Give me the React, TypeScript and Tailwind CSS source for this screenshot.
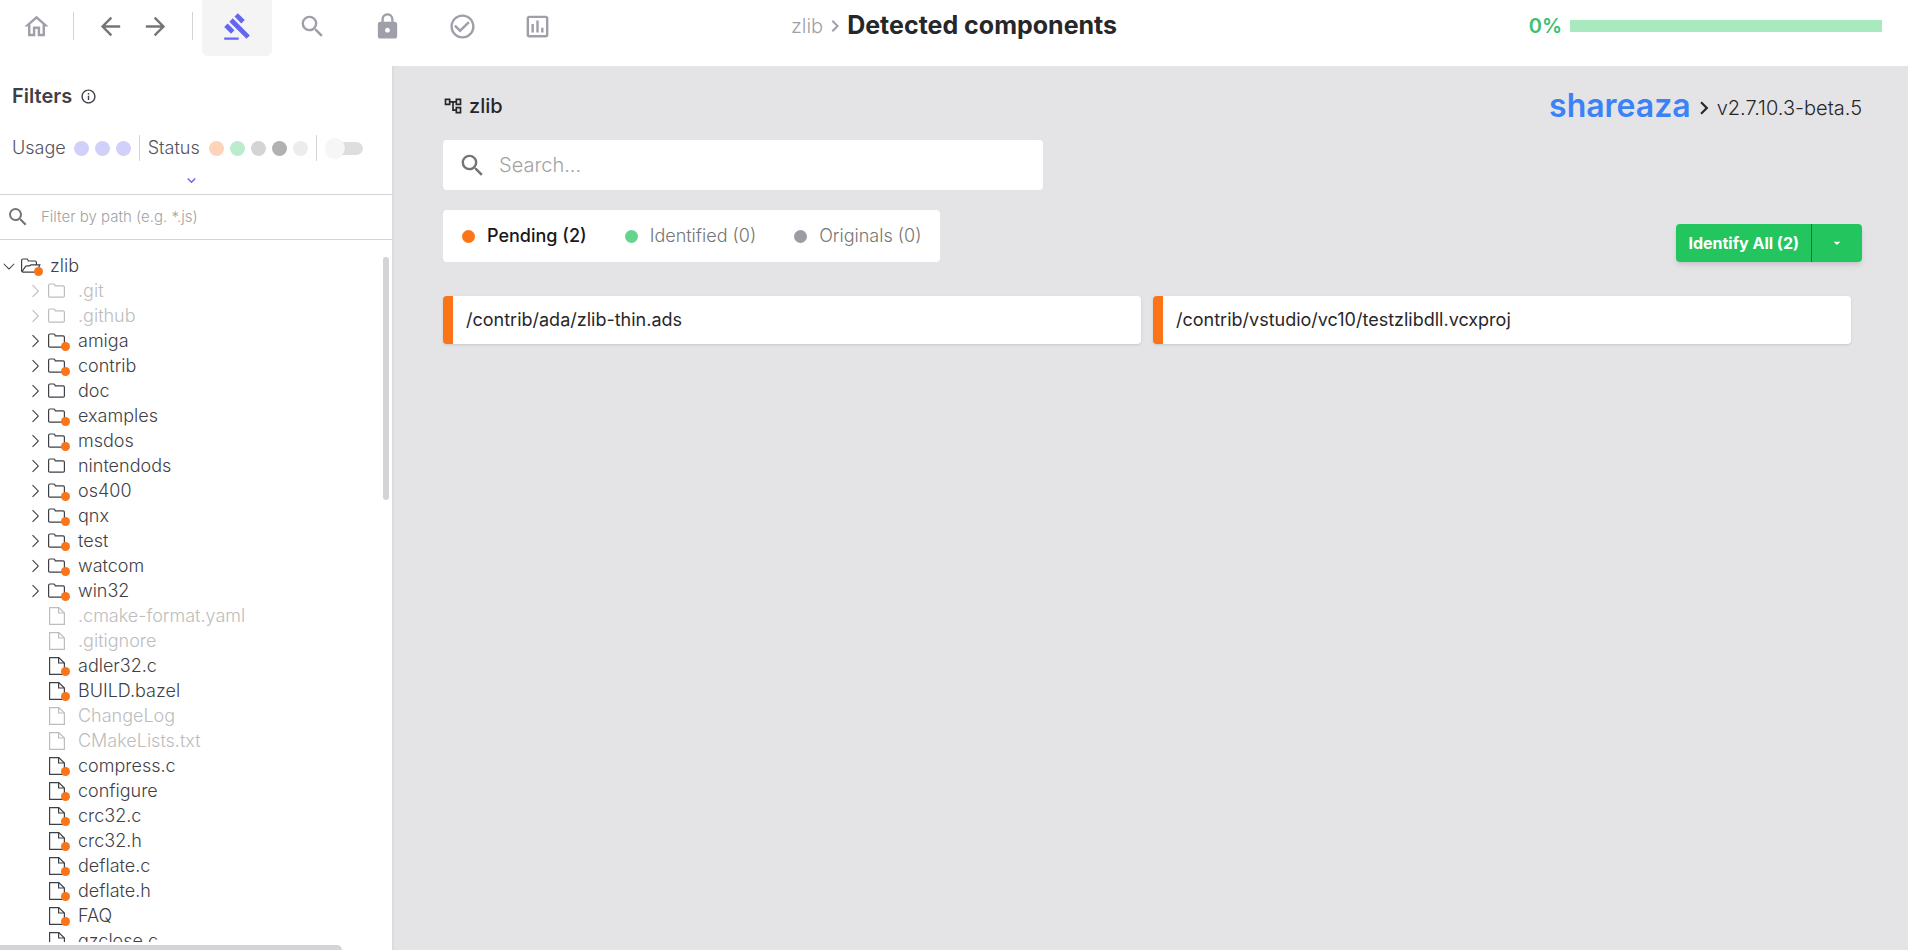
import { clsx } from 'clsx';
import {
  MdArrowBack,
  MdArrowDropDown,
  MdArrowForward,
  MdCheckCircleOutline,
  MdChevronRight,
  MdGavel,
  MdInfoOutline,
  MdKeyboardArrowDown,
  MdLock,
  MdOutlineAccountTree,
  MdOutlineAssessment,
  MdOutlineHome,
  MdSearch,
} from 'react-icons/md';
import { VscChevronDown, VscChevronRight } from 'react-icons/vsc';

type Node = {
  name: string;
  kind: 'folder' | 'file';
  state: 'pending' | 'none' | 'ignored';
};

const nodes: Node[] = [
  { name: '.git', kind: 'folder', state: 'ignored' },
  { name: '.github', kind: 'folder', state: 'ignored' },
  { name: 'amiga', kind: 'folder', state: 'pending' },
  { name: 'contrib', kind: 'folder', state: 'pending' },
  { name: 'doc', kind: 'folder', state: 'none' },
  { name: 'examples', kind: 'folder', state: 'pending' },
  { name: 'msdos', kind: 'folder', state: 'pending' },
  { name: 'nintendods', kind: 'folder', state: 'none' },
  { name: 'os400', kind: 'folder', state: 'pending' },
  { name: 'qnx', kind: 'folder', state: 'pending' },
  { name: 'test', kind: 'folder', state: 'pending' },
  { name: 'watcom', kind: 'folder', state: 'pending' },
  { name: 'win32', kind: 'folder', state: 'pending' },
  { name: '.cmake-format.yaml', kind: 'file', state: 'ignored' },
  { name: '.gitignore', kind: 'file', state: 'ignored' },
  { name: 'adler32.c', kind: 'file', state: 'pending' },
  { name: 'BUILD.bazel', kind: 'file', state: 'pending' },
  { name: 'ChangeLog', kind: 'file', state: 'ignored' },
  { name: 'CMakeLists.txt', kind: 'file', state: 'ignored' },
  { name: 'compress.c', kind: 'file', state: 'pending' },
  { name: 'configure', kind: 'file', state: 'pending' },
  { name: 'crc32.c', kind: 'file', state: 'pending' },
  { name: 'crc32.h', kind: 'file', state: 'pending' },
  { name: 'deflate.c', kind: 'file', state: 'pending' },
  { name: 'deflate.h', kind: 'file', state: 'pending' },
  { name: 'FAQ', kind: 'file', state: 'pending' },
  { name: 'gzclose.c', kind: 'file', state: 'pending' },
];

const sections = [
  { label: 'Detected components', icon: MdGavel, active: true },
  { label: 'Search keywords', icon: MdSearch, active: false },
  { label: 'Vulnerabilities', icon: MdLock, active: false },
  { label: 'Identified', icon: MdCheckCircleOutline, active: false },
  { label: 'Reports', icon: MdOutlineAssessment, active: false },
];

const usageDots = ['bg-[#d1d0fb]', 'bg-[#d1d0fb]', 'bg-[#d1d0fb]'];
const statusDots = ['bg-[#fdd4b8]', 'bg-[#bbeccd]', 'bg-[#d4d4d4]', 'bg-[#b1b1b1]', 'bg-[#ececec]'];

const tabs = [
  { label: 'Pending (2)', dot: 'bg-[#fb7518]', active: true },
  { label: 'Identified (0)', dot: 'bg-[#64d68c]', active: false },
  { label: 'Originals (0)', dot: 'bg-[#9c9ca3]', active: false },
];

const files = ['/contrib/ada/zlib-thin.ads', '/contrib/vstudio/vc10/testzlibdll.vcxproj'];

function FolderIcon() {
  return (
    <svg width="20" height="20" viewBox="0 0 20 20" fill="none" stroke="currentColor" strokeWidth="1.2">
      <path d="M1.6 15V4.3Q1.6 3 2.9 3H6.6Q7.6 3 7.9 3.9L8.2 4.8H16Q17.4 4.8 17.4 6.2V15Q17.4 16.2 16.2 16.2H2.8Q1.6 16.2 1.6 15Z" />
    </svg>
  );
}

function FolderOpenIcon() {
  return (
    <svg width="22" height="20" viewBox="0 0 22 20" fill="none" stroke="currentColor" strokeWidth="1.2">
      <path d="M1.6 15.6V4.3Q1.6 3 2.9 3H6.6Q7.6 3 7.9 3.9L8.3 5H15Q16.4 5 16.4 6.4V9" />
      <path d="M1.8 16 5.4 10.6Q5.8 9.9 6.6 9.9L9.4 9.8 11 8.9H19.8L17.2 15.2Q16.8 16.2 15.8 16.2H2.2" />
    </svg>
  );
}

function FileIcon() {
  return (
    <svg width="20" height="20" viewBox="0 0 20 20" fill="none" stroke="currentColor" strokeWidth="1.2">
      <path d="M2.6 1.6H11.8L17.4 7V18.4H2.6Z" />
      <path d="M11.6 1.8V7H17.2" />
    </svg>
  );
}

function Header() {
  return (
    <header className="grid h-[66px] shrink-0 grid-cols-[1fr_auto_1fr] items-start bg-white">
      <nav className="flex items-start">
        <div className="flex h-[52px] items-center">
          <button aria-label="Home" className="flex w-[73px] justify-center text-zinc-400">
            <MdOutlineHome size={29} />
          </button>
          <div className="h-7 w-px bg-zinc-300" />
          <div className="flex w-[118px] items-center justify-center gap-4 text-[#757575]">
            <button aria-label="Back"><MdArrowBack size={29} /></button>
            <button aria-label="Forward"><MdArrowForward size={29} /></button>
          </div>
          <div className="h-7 w-px bg-zinc-300" />
        </div>
        <div className="ml-[9px] flex gap-[5px]">
          {sections.map(({ label, icon: Icon, active }) => (
            <button
              key={label}
              aria-label={label}
              className={clsx(
                'flex h-14 w-[70px] items-center justify-center rounded-b-md pb-1',
                active ? 'bg-[#f4f4f4] text-[#6366f1]' : 'text-zinc-400',
              )}
            >
              <Icon size={29} />
            </button>
          ))}
        </div>
      </nav>

      <div className="flex h-[52px] items-center">
        <a href="#" className="text-xl font-light text-zinc-400">zlib</a>
        <MdChevronRight className="text-zinc-400" size={24} />
        <h1 className="text-[25px] font-bold text-zinc-800">Detected components</h1>
      </div>

      <div className="flex h-[52px] items-center justify-end gap-2 pr-[26px]">
        <span className="text-xl font-semibold text-[#3dbf6b]">0%</span>
        <div className="h-3 w-[312px] bg-[#a9e9c0]" />
      </div>
    </header>
  );
}

function Dots({ colors }: { colors: string[] }) {
  return (
    <div className="flex gap-[6px]">
      {colors.map((color, i) => (
        <span key={i} className={clsx('size-[15px] rounded-full', color)} />
      ))}
    </div>
  );
}

function TreeRow({ node }: { node: Node }) {
  return (
    <li>
      <button
        className={clsx(
          'flex h-[25px] items-center pl-[25px] whitespace-nowrap',
          node.state === 'ignored' ? 'text-[#bdbdbd]' : 'text-zinc-700',
        )}
      >
        <span className="w-[22px]">{node.kind === 'folder' && <VscChevronRight size={20} />}</span>
        <span className="relative mr-[11px]">
          {node.kind === 'folder' ? <FolderIcon /> : <FileIcon />}
          {node.state === 'pending' && (
            <span className="absolute -right-[3px] bottom-0 size-[9px] rounded-full bg-[#fb7518]" />
          )}
        </span>
        {node.name}
      </button>
    </li>
  );
}

function Sidebar() {
  return (
    <aside className="flex w-[394px] shrink-0 flex-col border-r-2 border-[#dcdcde] bg-white">
      <div className="border-b border-zinc-300 px-3 pt-4 pb-1">
        <div className="flex items-center gap-2">
          <h2 className="text-xl font-semibold text-zinc-700">Filters</h2>
          <MdInfoOutline className="text-zinc-700" size={17} />
        </div>
        <div className="mt-6 flex h-7 items-center text-lg font-light text-zinc-600">
          <span className="mr-2">Usage</span>
          <Dots colors={usageDots} />
          <div className="mx-2 h-[26px] w-px bg-zinc-300" />
          <span className="mr-[9px]">Status</span>
          <Dots colors={statusDots} />
          <div className="mx-2 h-[26px] w-px bg-zinc-300" />
          <label className="relative flex h-5 w-[38px] items-center">
            <input
              type="checkbox"
              aria-label="Show only filtered files"
              className="ml-auto h-[13px] w-[34px] appearance-none rounded-full bg-[#dedede]"
            />
            <span className="absolute left-0 size-5 rounded-full bg-[#f6f6f6] shadow-xs" />
          </label>
        </div>
        <button aria-label="More filters" className="mr-auto ml-[171px] mt-2 flex h-5 items-center text-[#6366f1]">
          <MdKeyboardArrowDown size={17} />
        </button>
      </div>

      <label className="flex h-[45px] shrink-0 items-center gap-[11px] border-b border-zinc-300 pl-[6px]">
        <MdSearch className="text-[#757575]" size={24} />
        <input
          type="text"
          aria-label="Filter by path"
          placeholder="Filter by path (e.g. *.js)"
          className="w-72 text-[15px] font-light outline-none placeholder:text-[#a3a3a3]"
        />
      </label>

      <div className="flex min-h-0 grow justify-between pt-[13px] pr-[3px]">
        <ul className="overflow-hidden text-lg font-light">
          <li>
            <button className="flex h-[25px] items-center text-zinc-700">
              <VscChevronDown size={18} />
              <span className="relative mr-[8px] ml-[2px]">
                <FolderOpenIcon />
                <span className="absolute -right-px bottom-0 size-[9px] rounded-full bg-[#fb7518]" />
              </span>
              zlib
            </button>
            <ul>
              {nodes.map((node) => <TreeRow key={node.name} node={node} />)}
            </ul>
          </li>
        </ul>
        <div className="mt-1 h-[243px] w-[6px] rounded-full bg-zinc-300" />
      </div>
      <div className="mt-[3px] h-[5px] w-[342px] shrink-0 rounded-tr-md bg-zinc-300" />
    </aside>
  );
}

function Content() {
  return (
    <main className="grow bg-[#e4e4e6] pt-5 pr-[46px] pl-[49px]">
      <div className="flex h-10 items-center justify-between">
        <div className="flex items-center gap-[6px] text-zinc-800">
          <MdOutlineAccountTree size={20} />
          <span className="text-xl font-medium">zlib</span>
        </div>
        <div className="flex items-center">
          <a href="#" className="text-[32px] leading-10 font-semibold text-[#3b82f6]">shareaza</a>
          <MdChevronRight className="mt-1 text-zinc-800" size={26} />
          <span className="mt-1 text-xl font-light text-zinc-800">v2.7.10.3-beta.5</span>
        </div>
      </div>

      <label className="mt-[14px] flex h-[50px] w-[600px] max-w-full items-center gap-3 rounded bg-white px-[15px]">
        <MdSearch className="text-[#757575]" size={29} />
        <input
          type="text"
          aria-label="Search"
          placeholder="Search..."
          className="grow text-xl font-light outline-none placeholder:text-[#a3a3a3]"
        />
      </label>

      <div className="mt-5 flex items-end justify-between">
        <div className="flex h-[52px] items-center gap-[38px] rounded bg-white px-[19px]">
          {tabs.map((tab) => (
            <button
              key={tab.label}
              className={clsx(
                'flex items-center gap-3 text-lg',
                tab.active ? 'font-medium text-zinc-900' : 'font-light text-[#757575]',
              )}
            >
              <span className={clsx('size-[13px] rounded-full', tab.dot)} />
              {tab.label}
            </button>
          ))}
        </div>
        <div className="flex h-[38px] rounded bg-[#22c55e] text-white shadow-md">
          <button className="border-r border-green-700 px-3 text-base font-bold">Identify All (2)</button>
          <button aria-label="More actions" className="flex w-[50px] items-center justify-center">
            <MdArrowDropDown size={16} />
          </button>
        </div>
      </div>

      <div className="mt-[34px] mr-[11px] grid grid-cols-2 gap-3">
        {files.map((file) => (
          <a
            key={file}
            href="#"
            className="flex h-12 items-center rounded border-l-[10px] border-[#fb7518] bg-white pl-[13px] text-lg text-zinc-800 shadow-sm"
          >
            {file}
          </a>
        ))}
      </div>
    </main>
  );
}

export default function App() {
  return (
    <div className="flex h-screen flex-col overflow-hidden bg-white font-['Inter',sans-serif]">
      <Header />
      <div className="flex min-h-0 grow">
        <Sidebar />
        <Content />
      </div>
    </div>
  );
}
